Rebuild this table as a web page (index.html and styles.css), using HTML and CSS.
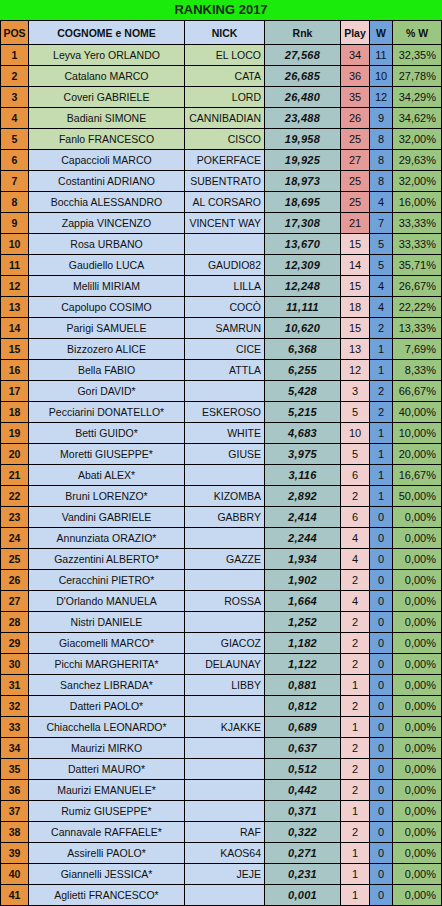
FILE: index.html
```html
<!DOCTYPE html>
<html lang="it">
<head>
  <meta charset="UTF-8">
  <meta name="viewport" content="width=device-width, initial-scale=1.0">
  <title>Ranking 2017</title>
  <link rel="stylesheet" href="styles.css">
</head>
<body>
  <div class="ranking" id="ranking">
    <div class="title">RANKING 2017</div>
    <div class="cell head pos">POS</div>
    <div class="cell head name">COGNOME e NOME</div>
    <div class="cell head nick">NICK</div>
    <div class="cell head rnk">Rnk</div>
    <div class="cell head play">Play</div>
    <div class="cell head w">W</div>
    <div class="cell head pct">% W</div>
  </div>

  <script>
    const players = [
      ['Leyva Yero ORLANDO', 'EL LOCO', '27,568', 34, 11, '32,35%'],
      ['Catalano MARCO', 'CATA', '26,685', 36, 10, '27,78%'],
      ['Coveri GABRIELE', 'LORD', '26,480', 35, 12, '34,29%'],
      ['Badiani SIMONE', 'CANNIBADIAN', '23,488', 26, 9, '34,62%'],
      ['Fanlo FRANCESCO', 'CISCO', '19,958', 25, 8, '32,00%'],
      ['Capaccioli MARCO', 'POKERFACE', '19,925', 27, 8, '29,63%'],
      ['Costantini ADRIANO', 'SUBENTRATO', '18,973', 25, 8, '32,00%'],
      ['Bocchia ALESSANDRO', 'AL CORSARO', '18,695', 25, 4, '16,00%'],
      ['Zappia VINCENZO', 'VINCENT WAY', '17,308', 21, 7, '33,33%'],
      ['Rosa URBANO', '', '13,670', 15, 5, '33,33%'],
      ['Gaudiello LUCA', 'GAUDIO82', '12,309', 14, 5, '35,71%'],
      ['Melilli MIRIAM', 'LILLA', '12,248', 15, 4, '26,67%'],
      ['Capolupo COSIMO', 'COCÒ', '11,111', 18, 4, '22,22%'],
      ['Parigi SAMUELE', 'SAMRUN', '10,620', 15, 2, '13,33%'],
      ['Bizzozero ALICE', 'CICE', '6,368', 13, 1, '7,69%'],
      ['Bella FABIO', 'ATTLA', '6,255', 12, 1, '8,33%'],
      ['Gori DAVID*', '', '5,428', 3, 2, '66,67%'],
      ['Pecciarini DONATELLO*', 'ESKEROSO', '5,215', 5, 2, '40,00%'],
      ['Betti GUIDO*', 'WHITE', '4,683', 10, 1, '10,00%'],
      ['Moretti GIUSEPPE*', 'GIUSE', '3,975', 5, 1, '20,00%'],
      ['Abati ALEX*', '', '3,116', 6, 1, '16,67%'],
      ['Bruni LORENZO*', 'KIZOMBA', '2,892', 2, 1, '50,00%'],
      ['Vandini GABRIELE', 'GABBRY', '2,414', 6, 0, '0,00%'],
      ['Annunziata ORAZIO*', '', '2,244', 4, 0, '0,00%'],
      ['Gazzentini ALBERTO*', 'GAZZE', '1,934', 4, 0, '0,00%'],
      ['Ceracchini PIETRO*', '', '1,902', 2, 0, '0,00%'],
      ["D'Orlando MANUELA", 'ROSSA', '1,664', 4, 0, '0,00%'],
      ['Nistri DANIELE', '', '1,252', 2, 0, '0,00%'],
      ['Giacomelli MARCO*', 'GIACOZ', '1,182', 2, 0, '0,00%'],
      ['Picchi MARGHERITA*', 'DELAUNAY', '1,122', 2, 0, '0,00%'],
      ['Sanchez LIBRADA*', 'LIBBY', '0,881', 1, 0, '0,00%'],
      ['Datteri PAOLO*', '', '0,812', 2, 0, '0,00%'],
      ['Chiacchella LEONARDO*', 'KJAKKE', '0,689', 1, 0, '0,00%'],
      ['Maurizi MIRKO', '', '0,637', 2, 0, '0,00%'],
      ['Datteri MAURO*', '', '0,512', 2, 0, '0,00%'],
      ['Maurizi EMANUELE*', '', '0,442', 2, 0, '0,00%'],
      ['Rumiz GIUSEPPE*', '', '0,371', 1, 0, '0,00%'],
      ['Cannavale RAFFAELE*', 'RAF', '0,322', 2, 0, '0,00%'],
      ['Assirelli PAOLO*', 'KAOS64', '0,271', 1, 0, '0,00%'],
      ['Giannelli JESSICA*', 'JEJE', '0,231', 1, 0, '0,00%'],
      ['Aglietti FRANCESCO*', '', '0,001', 1, 0, '0,00%']
    ];

    function addCell(parent, cls, text) {
      const div = document.createElement('div');
      div.className = 'cell ' + cls;
      div.textContent = text;
      parent.appendChild(div);
    }

    const table = document.getElementById('ranking');
    players.forEach((p, i) => {
      const top = i < 5 ? ' top' : '';
      addCell(table, 'pos', i + 1);
      addCell(table, 'name' + top, p[0]);
      addCell(table, 'nick' + top, p[1]);
      addCell(table, 'rnk', p[2]);
      addCell(table, 'play' + (i < 9 ? ' hot' : ''), p[3]);
      addCell(table, 'w', p[4]);
      addCell(table, 'pct', p[5]);
    });
  </script>
</body>
</html>
```

FILE: styles.css
```css
body {
  margin: 0;
  background-color: #fff;
  font-family: "Liberation Sans", Arial, sans-serif;
  color: #111;
}
.ranking {
  display: grid;
  grid-template-columns: 27px 155px 79px 75px 28px 22px 48px;
  grid-template-rows: 20px 23px;
  grid-auto-rows: 20px;
  gap: 1px;
  padding: 0 1px 1px;
  background-color: #000;
  width: 440px;
}
.title {
  grid-column: span 7;
  margin: 0 -1px;
  background-color: #1aeb0a;
  font-size: 13px;
  font-weight: bold;
  text-align: center;
  line-height: 20px;
  color: #1c2a1c;
}
.cell {
  display: flex;
  align-items: center;
  justify-content: center;
  font-size: 10.5px;
  white-space: nowrap;
  overflow: hidden;
}
.cell.head {
  font-weight: bold;
  font-size: 10.5px;
}
.pos {
  background-color: #e8933f;
  font-weight: bold;
}
.name {
  background-color: #c6d9f1;
}
.nick {
  background-color: #c6d9f1;
  justify-content: flex-end;
  padding-right: 3px;
}
.head.nick {
  justify-content: center;
  padding-right: 0;
}
.name.top,
.nick.top {
  background-color: #c4dcaf;
}
.rnk {
  background-color: #a8c6c6;
  font-weight: bold;
  font-style: italic;
  font-size: 11px;
  letter-spacing: 0.3px;
}
.head.rnk {
  font-style: normal;
  letter-spacing: 0;
}
.play {
  background-color: #f2cfcf;
  font-size: 11px;
}
.play.hot {
  background-color: #e69a98;
}
.w {
  background-color: #6fa1da;
  font-size: 11px;
}
.pct {
  background-color: #9bc682;
  justify-content: flex-end;
  padding-right: 5px;
  font-size: 11px;
}
.head.pct {
  justify-content: center;
  padding-right: 0;
}
```
